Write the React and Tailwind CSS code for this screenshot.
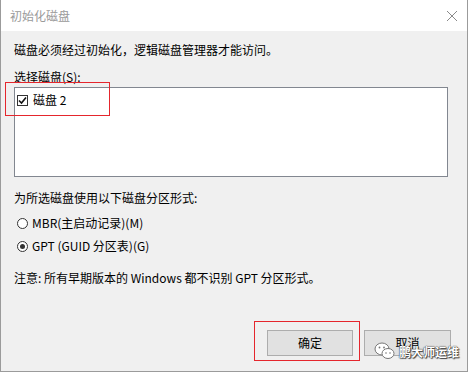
import React from 'react';

const font = { fontFamily: '"Noto Sans CJK SC", "Microsoft YaHei", sans-serif' };

const Radio = ({ checked, label }) => (
  <div className="flex items-center h-4 pl-[3px]">
    <span className="w-[11px] h-[11px] rounded-full border border-[#333] bg-white flex items-center justify-center">
      {checked && <span className="w-[5px] h-[5px] rounded-full bg-[#333]" />}
    </span>
    <span className="ml-[4px]">{label}</span>
  </div>
);

export default function App() {
  return (
    <div
      className="relative w-[468px] h-[372px] bg-[#f0f0f0] border-l border-r border-b border-[#9b9b9b] text-[12px] leading-4 text-black overflow-hidden"
      style={font}
    >
      {/* title bar */}
      <div className="h-[31px] bg-white flex items-center justify-between pl-[9px] pr-[9px]">
        <span className="text-[#9a9a9a]">初始化磁盘</span>
        <svg width="12" height="12" viewBox="0 0 12 12">
          <path d="M1 1 L11 11 M11 1 L1 11" stroke="#8a8a8a" strokeWidth="1" />
        </svg>
      </div>

      <div className="pl-[13px] pr-[20px] pt-[11px]">
        <p>磁盘必须经过初始化，逻辑磁盘管理器才能访问。</p>
        <p className="mt-[11px]">选择磁盘(S):</p>

        <div className="mt-[2px] w-[434px] h-[90px] border border-[#828790] bg-white pt-[4px] pl-[2px]">
          <div className="flex items-center h-4">
            <span className="w-[11px] h-[11px] border border-[#333] bg-white flex items-center justify-center">
              <svg width="9" height="9" viewBox="0 0 9 9">
                <path d="M1 4.5 L3.5 7 L8 1.5" stroke="#111" strokeWidth="1.6" fill="none" />
              </svg>
            </span>
            <span className="ml-[5px]">磁盘 2</span>
          </div>
        </div>

        <p className="mt-[13px]">为所选磁盘使用以下磁盘分区形式:</p>
        <div className="mt-[9px]">
          <Radio label="MBR(主启动记录)(M)" />
        </div>
        <div className="mt-[7px]">
          <Radio checked label="GPT (GUID 分区表)(G)" />
        </div>

        <p className="mt-[16px]">注意: 所有早期版本的 Windows 都不识别 GPT 分区形式。</p>
      </div>

      {/* buttons */}
      <div className="flex justify-end gap-[11px] pr-[16px] mt-[44px]">
        <button className="w-[86px] h-[26px] bg-[#e1e1e1] border border-[#adadad]">确定</button>
        <button className="w-[87px] h-[26px] bg-[#e1e1e1] border border-[#adadad]">取消</button>
      </div>

      {/* annotations */}
      <div className="absolute left-[4px] top-[82px] w-[105px] h-[34px] border border-[#e5262d]" />
      <div className="absolute left-[253px] top-[321px] w-[106px] h-[40px] border border-[#e5262d]" />

      {/* watermark */}
      <div className="absolute left-[373px] top-[340px] flex items-center">
        <svg width="21" height="19" viewBox="0 0 21 19">
          <ellipse cx="8" cy="8" rx="7" ry="6" fill="#fff" stroke="#777" strokeWidth="1" />
          <ellipse cx="14" cy="12.5" rx="6" ry="5" fill="#fff" stroke="#777" strokeWidth="1" />
          <circle cx="5.5" cy="6.5" r="0.9" fill="#777" />
          <circle cx="10" cy="6.5" r="0.9" fill="#777" />
          <circle cx="12" cy="12" r="0.8" fill="#777" />
          <circle cx="16" cy="12" r="0.8" fill="#777" />
        </svg>
        <span
          className="ml-[4px] mt-[4px] text-white text-[12px] font-bold"
          style={{ textShadow: '0 0 1px #333, 0 0 1px #333, 1px 1px 1px #444' }}
        >
          鹏大师运维
        </span>
      </div>
    </div>
  );
}
